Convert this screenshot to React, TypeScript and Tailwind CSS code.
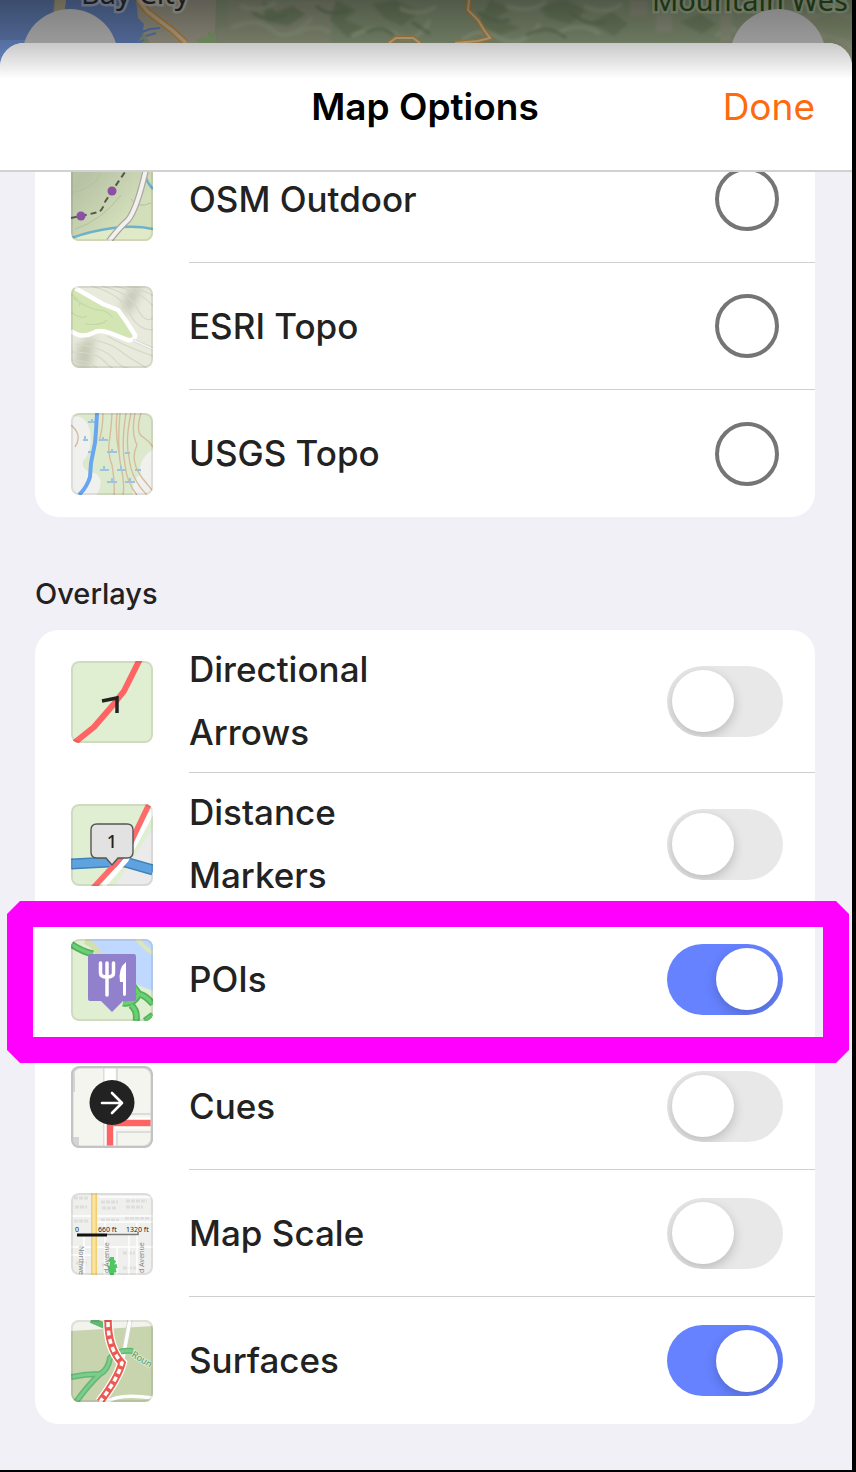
import { useState } from 'react'
import type { ReactNode } from 'react'

type Option = {
  id: string
  label: string
  thumb: ReactNode
}

function Thumb({ children }: { children: ReactNode }) {
  return (
    <div className="relative ml-9 size-[82px] shrink-0 overflow-hidden rounded-lg">
      <svg viewBox="0 0 82 82" fill="none" className="size-full" aria-hidden="true">
        {children}
      </svg>
      <div className="absolute inset-0 rounded-lg border-2 border-black/8" />
    </div>
  )
}

const outdoorThumb = (
  <>
    <defs>
      <linearGradient id="slope" x1="0" y1="0" x2="1" y2="1">
        <stop offset="0.2" stopColor="#b7c3a4" />
        <stop offset="0.7" stopColor="#d3deba" />
      </linearGradient>
    </defs>
    <rect width="82" height="82" fill="url(#slope)" />
    <path d="M0 82V78Q30 66 82 70V82Z" fill="#e0eac6" />
    <path d="M0 34Q22 30 30 14M4 70Q30 62 50 36M60 40Q66 50 80 44" stroke="#b3c09d" />
    <path d="M0 79Q20 72 42 69T82 70M74 17Q77 25 82 30" stroke="#6fb0cb" strokeWidth="2.5" />
    <path d="M75 10Q66 50 57 61Q49 68 38 82" stroke="#a9a9a4" strokeWidth="6.5" />
    <path d="M75 10Q66 50 57 61Q49 68 38 82" stroke="#f3f0ee" strokeWidth="4" />
    <path d="M0 59L10 57L28 53Q32 50 34 43L41 32L54 13" stroke="#555a50" strokeWidth="2" strokeDasharray="6 4" />
    <circle cx="41" cy="32" r="4.5" fill="#8b4fa3" />
    <circle cx="10" cy="57" r="4.5" fill="#8b4fa3" />
  </>
)

const esriThumb = (
  <>
    <defs>
      <filter id="relief" x="-50%" y="-50%" width="200%" height="200%">
        <feGaussianBlur stdDeviation="4" />
      </filter>
    </defs>
    <rect width="82" height="82" fill="#e8eadc" />
    <path d="M50 20L60 0H72L58 30ZM6 60L24 48L20 82H4Z" fill="#c6c8b5" filter="url(#relief)" />
    <path
      d="M20 0Q50 8 58 26T82 44M30 0Q58 6 66 22T82 32M42 0Q68 4 82 20M56 0Q74 4 82 10M12 52Q38 56 48 64T76 82M4 58Q34 62 42 72T58 82M0 66Q24 66 32 74T42 82M0 74Q18 74 26 82M36 50Q58 62 82 70"
      stroke="#d6d7c9"
      strokeWidth="1.2"
    />
    <path d="M6 3L32 18L47 24L55 35L64 49Q64 55 57 54L39 47Q28 43 22 47Q10 53 0 46V0Z" fill="#d3e5b3" />
    <path d="M2 12Q20 24 28 24T42 32M0 26Q10 34 16 30M14 38Q30 40 36 34M0 8Q12 18 8 20" stroke="#c3d8a5" strokeWidth="1.2" />
    <path d="M4 2L32 18L47 24L55 35L64 49Q64 55 57 54L39 47Q28 43 22 47Q10 53 0 45" stroke="#fff" strokeWidth="4.5" />
    <path d="M62 54L82 63" stroke="#d3d2d0" strokeWidth="3" />
    <path d="M62 54L82 63" stroke="#f6f4f5" strokeWidth="1.5" />
  </>
)

const usgsThumb = (
  <>
    <rect width="82" height="82" fill="#dde9cd" />
    <path d="M0 4Q14 0 19 18Q22 38 12 48Q10 58 24 60Q34 66 26 82H0ZM82 36Q66 48 70 60Q60 68 62 82H82Z" fill="#f0f0ef" />
    <path
      d="M0 12Q12 22 4 34M32 0Q32 16 28 28M41 0Q40 18 38 30Q37 42 41 52Q44 70 43 82M49 0Q46 34 50 54Q54 70 52 82M55 0Q50 32 54 52Q56 70 66 82M60 0Q54 28 58 44Q60 66 76 82M64 0Q60 20 66 32Q58 48 72 66L82 78M70 0Q64 20 72 24Q78 28 82 34M46 0Q44 20 48 40"
      stroke="#d5bd9c"
      strokeWidth="1.4"
    />
    <path
      d="M17 9h8M28 27h9M17 39h7M36 39h10M29 57h9M46 57h9M36 69h10M54 69h10M64 57h6M12 27h5M54 40h5"
      stroke="#9cc3e0"
      strokeWidth="1.8"
    />
    <path d="M21 6v3M32 24v3M41 36v3M33 53v4M50 53v4M41 65v4M59 65v4M14 23v3" stroke="#9cc3e0" strokeWidth="2" />
    <path d="M26 0Q25 20 24 30L20 50L19 64Q16 74 8 82" stroke="#69a6f0" strokeWidth="4" />
  </>
)

const arrowsThumb = (
  <>
    <rect width="82" height="82" fill="#e0eed1" />
    <path d="M3 82L23 66L42 44L53 30L69 -2" stroke="#ff6464" strokeWidth="6" strokeLinejoin="round" />
    <path d="M31 40L46 37L46 52" stroke="#222" strokeWidth="3.5" />
  </>
)

const markersThumb = (
  <>
    <rect width="82" height="82" fill="#e0eed1" />
    <path d="M82 24L44 82H82Z" fill="#ebebeb" />
    <path d="M0 60L38 58L54 58L82 66" stroke="#3f83b8" strokeWidth="11" />
    <path d="M0 60L38 58L54 58L82 66" stroke="#5ea3df" strokeWidth="8" />
    <path d="M32 82L55 56L82 6" stroke="#fff" strokeWidth="5" />
    <path d="M22 84L46 58L60 38L78 0" stroke="#ff6b6b" strokeWidth="5.5" />
    <path
      d="M26 20H56Q62 20 62 26V48Q62 54 56 54H47L41 61L35 54H26Q20 54 20 48V26Q20 20 26 20Z"
      fill="#e2e2e2"
      stroke="#555"
      strokeWidth="1.4"
    />
    <text x="41" y="44" textAnchor="middle" className="fill-[#222] font-['Noto_Sans'] text-[18px] font-medium">
      1
    </text>
  </>
)

const poisThumb = (
  <>
    <rect width="82" height="82" fill="#e0eed1" />
    <path d="M16 0H82V52L62 44L30 14Z" fill="#bfd8ff" />
    <path d="M14 2Q24 6 28 16" stroke="#d2dfb0" strokeWidth="6" />
    <path d="M66 0Q74 10 82 14" stroke="#dce7b8" strokeWidth="4" />
    <path d="M0 5Q10 12 22 15M52 64Q62 66 68 55Q74 56 82 65M68 55L60 44M60 66Q67 72 65 82M74 82L82 76" stroke="#52b35b" strokeWidth="7" />
    <path d="M0 5Q10 12 22 15M52 64Q62 66 68 55Q74 56 82 65M68 55L60 44M60 66Q67 72 65 82M74 82L82 76" stroke="#6ad076" strokeWidth="3.5" />
    <path d="M19 15H63Q65 15 65 18V60Q65 62 63 62H52L41 73L30 62H19Q17 62 17 60V18Q17 15 19 15Z" fill="#9180cc" />
    <path d="M29.5 24V34Q29.5 38 36 38Q42.5 38 42.5 34V24M36 24V56" stroke="#fff" strokeWidth="3.5" strokeLinecap="round" />
    <path d="M55 23V55Q55 57 53.5 57Q52 57 52 55V43H49Q47 29 55 23Z" fill="#fff" />
  </>
)

const cuesThumb = (
  <>
    <rect width="82" height="82" fill="#f4f5ef" />
    <path d="M33 0V82M46 0V48H82M46 82V66H82" stroke="#dcdcda" strokeWidth="2" />
    <path d="M39 0V82M39 57H82" stroke="#fff" strokeWidth="11" />
    <path d="M39 82V57H82" stroke="#ff6464" strokeWidth="6.5" />
    <path d="M0 0V26H4V8ZM0 71H8V82H0Z" fill="#d4d4d2" />
    <rect x="1" y="1" width="80" height="80" rx="9" stroke="#d4d4d4" strokeWidth="3" />
    <circle cx="41" cy="36.5" r="22.5" fill="#222" />
    <path d="M31 37H51M41 27L51 37L41 47" stroke="#fff" strokeWidth="2.6" strokeLinecap="round" strokeLinejoin="round" />
  </>
)

const scaleThumb = (
  <>
    <rect width="82" height="82" fill="#efefed" />
    <path
      d="M3 5H17M30 9H47M55 8H76M4 14H16M31 15H45M55 14H72M3 28H17M30 27H48M54 25H78M5 70H16M31 72H45M52 60H64M52 75H66"
      stroke="#dededc"
      strokeWidth="3"
      strokeDasharray="4 1"
    />
    <path d="M0 23H82M28 4H82M26 29H82M0 54H20M0 62H20M26 54H82M46 54V82M58 42V82M66 30V82M13 44V82M34 30V82" stroke="#fff" strokeWidth="1.5" />
    <path d="M23 0V82" stroke="#f0cf72" strokeWidth="6" />
    <path d="M23 0V82" stroke="#fbe49d" strokeWidth="3" />
    <path d="M41 64V82M38 66L44 70M37 75L46 73M38 79L45 77" stroke="#4cc764" strokeWidth="4" />
    <g className="fill-[#888] font-['Noto_Sans'] text-[7px]">
      <text transform="translate(8 53) rotate(90)">Northwe</text>
      <text transform="translate(38 80) rotate(-90)">d Avenue</text>
      <text transform="translate(73 80) rotate(-90)">d Avenue</text>
    </g>
    <path d="M6 42H36" stroke="#111" strokeWidth="3" />
    <path d="M36 41.5H67V39" stroke="#777" strokeWidth="1.5" />
    <g className="fill-[#222] font-['Noto_Sans'] text-[7px]">
      <text x="4" y="39">0</text>
      <text x="27" y="39">660 ft</text>
      <text x="55" y="39">1320 ft</text>
    </g>
  </>
)

const surfacesThumb = (
  <>
    <rect width="82" height="82" fill="#c7d4ae" />
    <path d="M0 0H82V6L0 11Z" fill="#f2f3ec" />
    <path d="M59 0L52 36" stroke="#d2d5ca" strokeWidth="5" />
    <path d="M59 0L52 38M36 82Q48 73 82 78" stroke="#fff" strokeWidth="3.5" />
    <path d="M0 57Q14 54 29 54Q37 50 39 38Q46 29 62 31M29 54Q18 64 5 82M20 0L34 6" stroke="#63b974" strokeWidth="6" />
    <path d="M0 57Q14 54 29 54Q37 50 39 38Q46 29 62 31M29 54Q18 64 5 82" stroke="#7ccc8b" strokeWidth="3" />
    <path d="M37 0Q37 28 51 43Q47 58 29 82" stroke="#fff" strokeWidth="10" />
    <path d="M37 0Q37 28 51 43Q47 58 29 82" stroke="#ea5a50" strokeWidth="7.5" />
    <path d="M37 2Q37 28 51 43Q47 58 29 82" stroke="#fff" strokeWidth="3.5" strokeDasharray="5 3.5" />
    <text
      transform="translate(60 36) rotate(32)"
      className="fill-[#4f9a68] stroke-[#d9e7cd] font-['Noto_Sans'] text-[9px] [paint-order:stroke] [stroke-width:2px]"
    >
      Roun
    </text>
  </>
)

const baseMaps: Option[] = [
  { id: 'osm-outdoor', label: 'OSM Outdoor', thumb: outdoorThumb },
  { id: 'esri-topo', label: 'ESRI Topo', thumb: esriThumb },
  { id: 'usgs-topo', label: 'USGS Topo', thumb: usgsThumb },
]

const overlays: Option[] = [
  { id: 'arrows', label: 'Directional Arrows', thumb: arrowsThumb },
  { id: 'markers', label: 'Distance Markers', thumb: markersThumb },
  { id: 'pois', label: 'POIs', thumb: poisThumb },
  { id: 'cues', label: 'Cues', thumb: cuesThumb },
  { id: 'scale', label: 'Map Scale', thumb: scaleThumb },
  { id: 'surfaces', label: 'Surfaces', thumb: surfacesThumb },
]

function MapBackdrop() {
  return (
    <div className="absolute inset-x-0 top-0 h-[72px] overflow-hidden" aria-hidden="true">
      <svg viewBox="0 0 852 72" preserveAspectRatio="xMidYMin slice" fill="none" className="size-full">
        <defs>
          <linearGradient id="shade" x1="0" y1="0" x2="0" y2="1">
            <stop offset="0" stopColor="#000" stopOpacity="0.42" />
            <stop offset="0.6" stopColor="#000" stopOpacity="0.22" />
            <stop offset="1" stopColor="#000" stopOpacity="0.05" />
          </linearGradient>
          <filter id="hills">
            <feGaussianBlur stdDeviation="1.5" />
          </filter>
        </defs>
        <rect width="852" height="72" fill="#8b9a7b" />
        <path d="M130 0H216L215 34L196 43L150 43L136 20Z" fill="#a3a08f" />
        <path d="M0 0H54L53 12L58 18V43H0ZM66 0H136L138 18L144 24L142 36L137 43H60L64 16Z" fill="#6582bb" />
        <path d="M55 0H66L64 14H54Z" fill="#b5ac8d" />
        <path d="M0 40H30V72H0Z" fill="#6f90d0" />
        <path d="M142 32L150 29L160 28M146 36L156 33M138 43L144 40" stroke="#5c82c6" strokeWidth="2" />
        <path d="M197 39L208 37V32L216 34V43H197Z" fill="#8aa873" />
        {/* hill shading */}
        <g filter="url(#hills)" opacity="0.6">
          <path d="M228 0H336L330 43H216V28L228 26Z" fill="#9c9c88" />
          <path
            d="M262 0L276 12L292 6L306 14L288 26L266 22ZM336 0L356 10L344 20L366 28L348 38L330 20ZM372 4L396 0L420 12L402 26L384 18ZM490 0L512 8L496 18L520 28L498 36L478 22ZM536 4L566 0L586 10L570 24L548 18ZM590 22L612 12L628 24L614 36ZM680 22L700 14L716 24L702 34Z"
            fill="#6f835f"
          />
          <path
            d="M240 6Q262 14 276 2M232 28Q256 16 272 30T312 18M296 34Q316 22 330 32M352 36Q376 22 396 34T430 20M400 8Q420 18 436 6M462 40Q480 26 500 38T540 24M506 6Q530 14 546 2M556 34Q580 20 600 34M584 6Q606 16 622 4M716 36Q730 22 736 32"
            stroke="#a7b395"
            strokeWidth="4"
          />
          <path
            d="M252 12Q268 24 286 14M316 6Q330 18 348 10M366 32Q384 24 394 36M412 22L430 34M478 12Q492 24 510 20M526 36Q546 22 566 38M570 12Q588 28 606 22"
            stroke="#5f7354"
            strokeWidth="3"
          />
          <path d="M630 0H648V16H630ZM656 14H672V32H656ZM720 14H732V42H720ZM760 14H852V72H760Z" fill="#a4a390" />
          <path d="M800 22L830 14L852 20V40L826 34ZM790 46L830 38L852 50V60Z" fill="#929c7c" />
        </g>
        <path d="M138 0L148 12L172 30L186 43" stroke="#c18f45" strokeWidth="7" />
        <path d="M138 0L148 12L172 30L186 43" stroke="#c9b694" strokeWidth="3.5" />
        <path d="M389 43L396 38H413L420 43M455 43L478 41L490 38L484 30L478 20L468 10L469 0" stroke="#c18f45" strokeWidth="5" />
        <path d="M389 43L396 38H413L420 43M455 43L478 41L490 38L484 30L478 20L468 10L469 0" stroke="#d0c09c" strokeWidth="2" />
        <rect width="852" height="72" fill="url(#shade)" />
        <g className="font-['Noto_Sans'] text-[29px] [paint-order:stroke] [stroke-width:5px]">
          <text x="81" y="4" className="fill-[#1c1c20] stroke-[#8c8c88]/50">
            Bay City
          </text>
          <text x="652" y="11" className="fill-[#1c3413] stroke-[#88917c]/40">
            Mountain Wes
          </text>
        </g>
      </svg>
      <div className="absolute top-[9px] left-[22px] size-24 rounded-full bg-linear-to-b from-[#858585] to-[#c0c0c0]" />
      <div className="absolute top-[9px] right-[26px] size-24 rounded-full bg-linear-to-b from-[#858585] to-[#c0c0c0]" />
    </div>
  )
}

function Row({ id, label, thumb, control, last }: Option & { control: ReactNode; last?: boolean }) {
  return (
    <li className="relative flex min-h-[127px]">
      <div className="flex items-center">
        <Thumb>{thumb}</Thumb>
      </div>
      <div
        className={`ml-9 flex flex-1 items-center justify-between py-2 ${
          last ? '' : 'border-b border-[#cfcfcf]'
        }`}
      >
        <label htmlFor={id} className="max-w-64 text-[35px] leading-[63px] font-medium text-[#222]">
          {label}
        </label>
        {control}
      </div>
      {id === 'pois' && (
        <div className="pointer-events-none absolute -top-[15px] -right-[34px] -bottom-5 -left-7 z-10 border-[26px] border-[#ff00ff] [clip-path:polygon(13px_0,calc(100%-13px)_0,100%_13px,100%_calc(100%-13px),calc(100%-13px)_100%,13px_100%,0_calc(100%-13px),0_13px)]" />
      )}
    </li>
  )
}

export default function App() {
  const [baseMap, setBaseMap] = useState('')
  const [enabled, setEnabled] = useState(['pois', 'surfaces'])

  function toggle(id: string) {
    setEnabled((prev) => (prev.includes(id) ? prev.filter((x) => x !== id) : [...prev, id]))
  }

  return (
    <div className="min-h-screen bg-black pr-1 pb-0.5 font-['Inter',sans-serif]">
      <div className="relative overflow-hidden pt-[43px]">
        <MapBackdrop />
        <section className="relative overflow-hidden rounded-t-3xl bg-[#f1f0f6]" aria-label="Map Options">
          <header className="grid grid-cols-[1fr_auto_1fr] items-center border-b-2 border-[#d1d1d3] bg-linear-to-b from-[#c8c8c8] to-white to-[36px] pt-9 pr-[37px] pb-9 pl-[35px] text-[37px] leading-[55px]">
            <h1 className="col-start-2 font-semibold text-black">Map Options</h1>
            <button type="button" className="justify-self-end text-[#ff6a0f]">
              Done
            </button>
          </header>

          <main className="overflow-hidden pr-[37px] pb-[46px] pl-[35px]">
            <ul className="-mt-9 rounded-3xl bg-white">
              {baseMaps.map((option, i) => (
                <Row
                  key={option.id}
                  {...option}
                  last={i === baseMaps.length - 1}
                  control={
                    <input
                      id={option.id}
                      type="radio"
                      name="base-map"
                      checked={baseMap === option.id}
                      onChange={() => setBaseMap(option.id)}
                      className="mr-9 size-16 appearance-none rounded-full border-4 border-[#757575] checked:border-[20px] checked:border-[#6682ff]"
                    />
                  }
                />
              ))}
            </ul>

            <h2 className="pt-14 pb-4 text-[29px] leading-[41px] font-medium text-[#222]">Overlays</h2>
            <ul className="rounded-3xl bg-white">
              {overlays.map((option, i) => (
                <Row
                  key={option.id}
                  {...option}
                  last={i === overlays.length - 1}
                  control={
                    <input
                      id={option.id}
                      type="checkbox"
                      role="switch"
                      checked={enabled.includes(option.id)}
                      onChange={() => toggle(option.id)}
                      className="mr-8 flex h-[71px] w-[116px] appearance-none items-center overflow-hidden rounded-full bg-[#e8e8e8] px-[5px] before:size-[62px] before:rounded-full before:bg-white before:shadow-[0_4px_12px_rgba(0,0,0,0.2)] checked:justify-end checked:bg-[#6682ff]"
                    />
                  }
                />
              ))}
            </ul>
          </main>
        </section>
      </div>
    </div>
  )
}
